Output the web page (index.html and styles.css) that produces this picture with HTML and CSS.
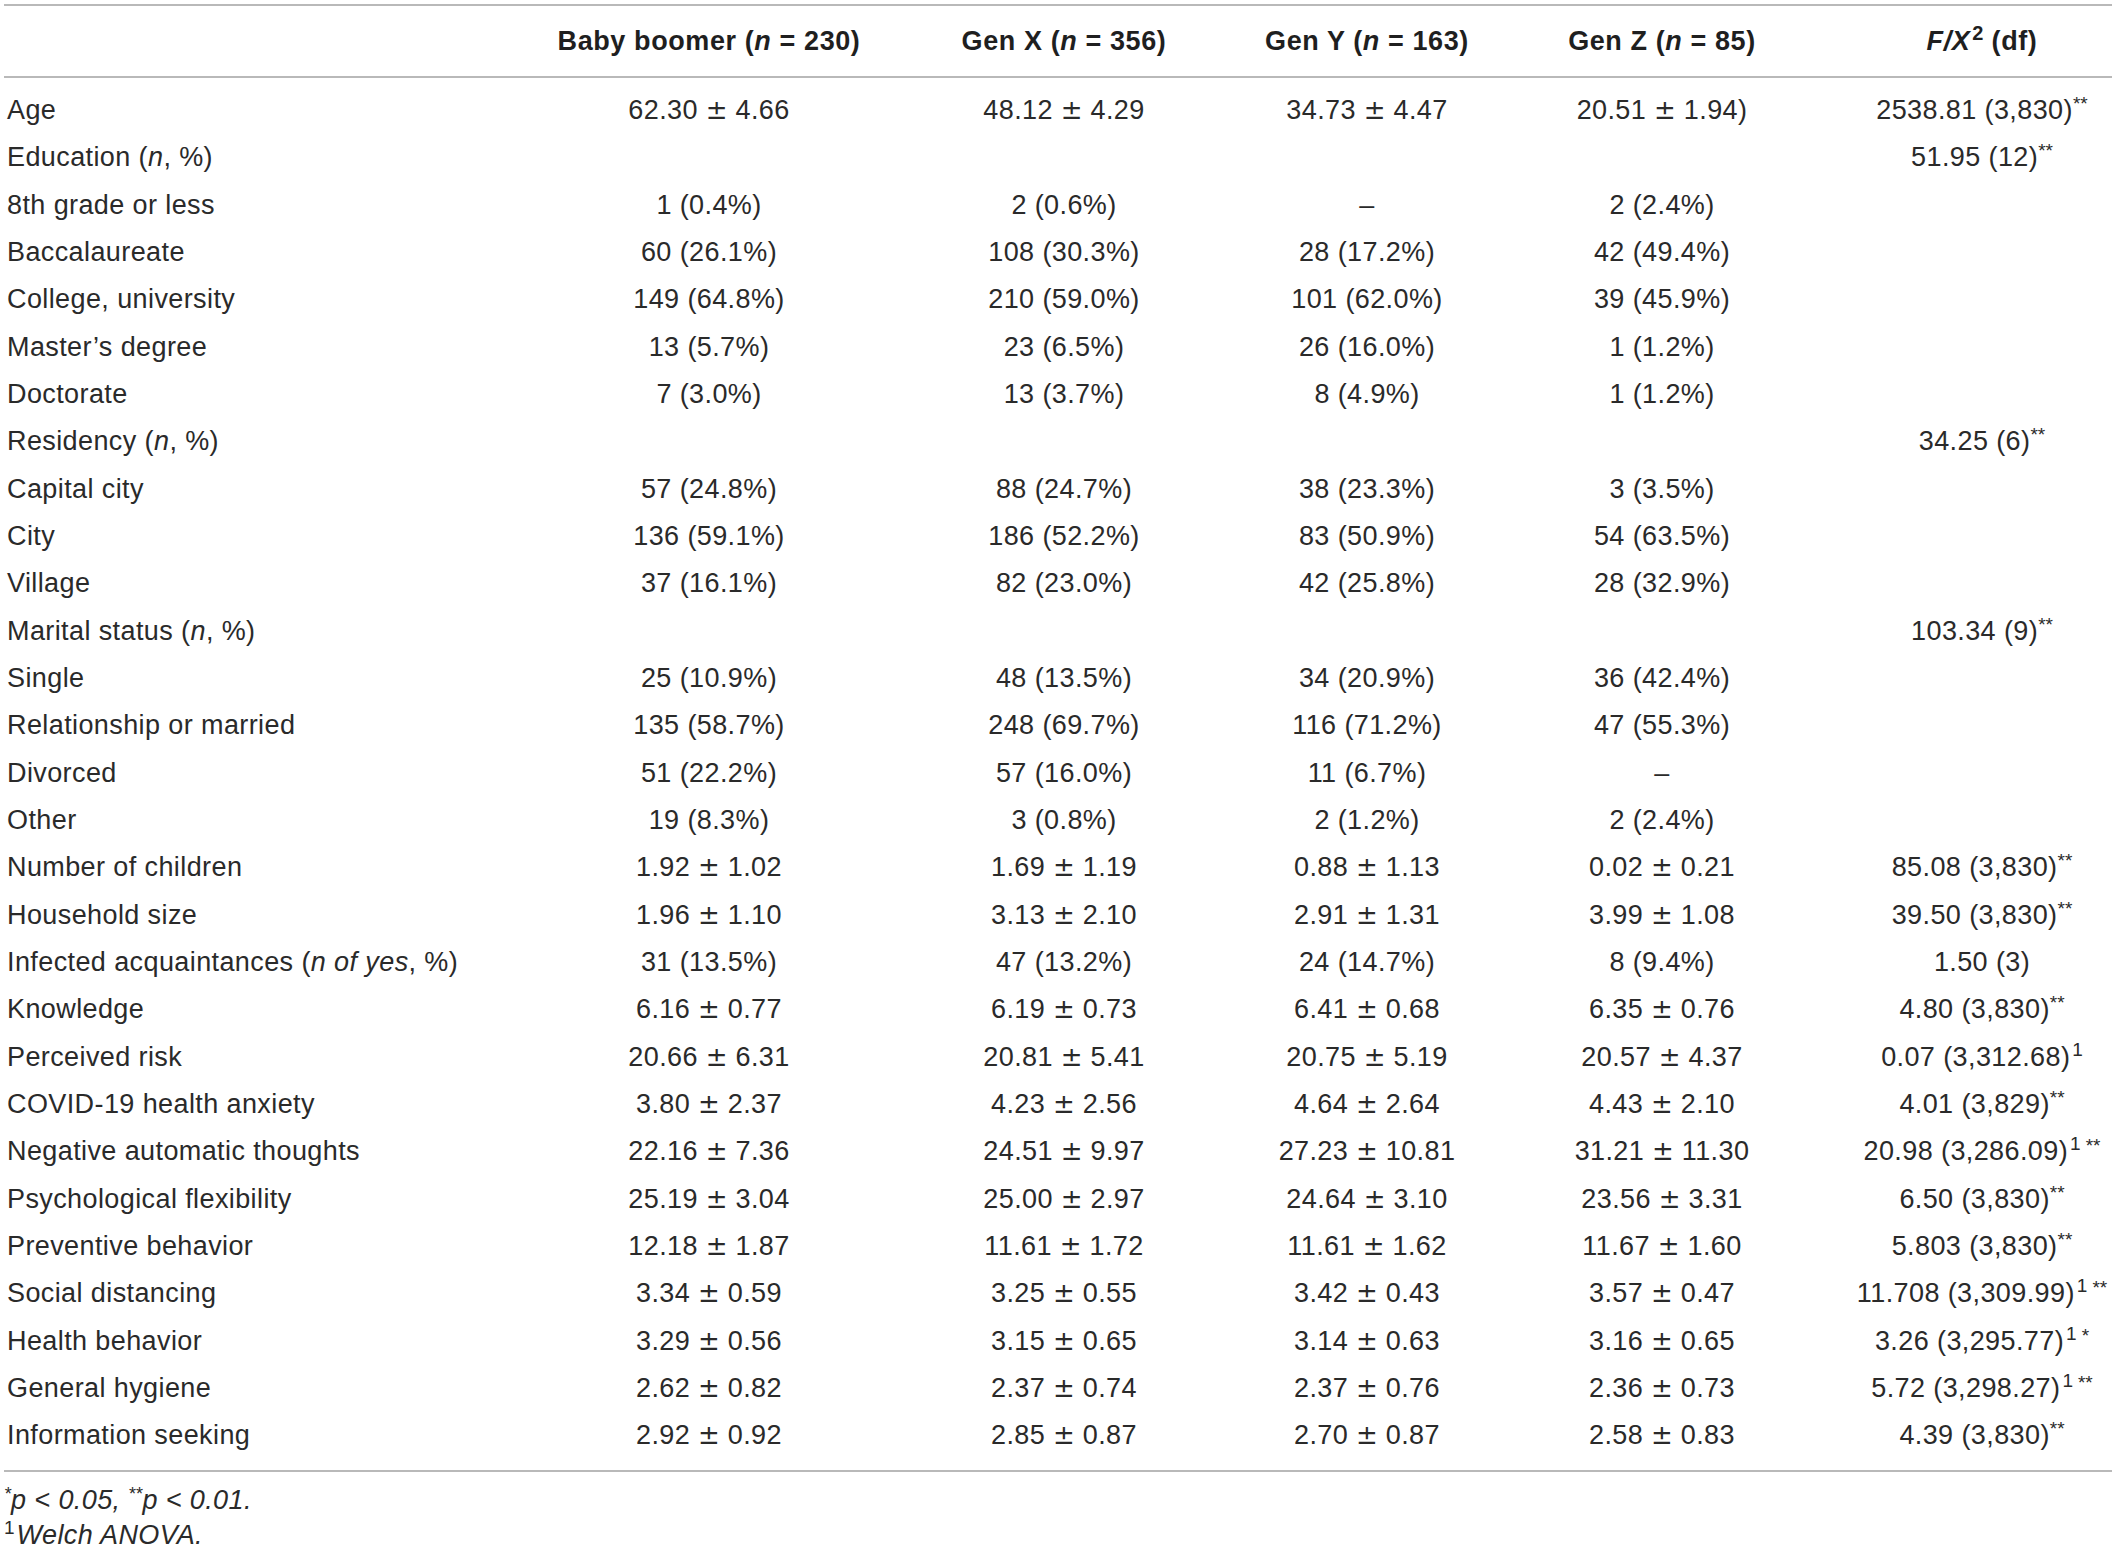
FILE: index.html
```html
<!DOCTYPE html>
<html>
<head>
<meta charset="utf-8">
<link rel="stylesheet" href="styles.css">
</head>
<body>
<div class="table">
  <div class="row head">
    <div class="c lab"></div>
    <div class="c">Baby boomer (<i>n</i> = 230)</div>
    <div class="c">Gen X (<i>n</i> = 356)</div>
    <div class="c">Gen Y (<i>n</i> = 163)</div>
    <div class="c">Gen Z (<i>n</i> = 85)</div>
    <div class="c f"><i>F/X</i><sup class="sq">2</sup> (df)</div>
  </div>
  <div class="body">
    <div class="row"><div class="c lab">Age</div><div class="c">62.30 <span class="pm">±</span> 4.66</div><div class="c">48.12 <span class="pm">±</span> 4.29</div><div class="c">34.73 <span class="pm">±</span> 4.47</div><div class="c">20.51 <span class="pm">±</span> 1.94)</div><div class="c f">2538.81 (3,830)<sup>**</sup></div></div>
    <div class="row"><div class="c lab">Education (<i>n</i>, %)</div><div class="c"></div><div class="c"></div><div class="c"></div><div class="c"></div><div class="c f">51.95 (12)<sup>**</sup></div></div>
    <div class="row"><div class="c lab">8th grade or less</div><div class="c">1 (0.4%)</div><div class="c">2 (0.6%)</div><div class="c">–</div><div class="c">2 (2.4%)</div><div class="c f"></div></div>
    <div class="row"><div class="c lab">Baccalaureate</div><div class="c">60 (26.1%)</div><div class="c">108 (30.3%)</div><div class="c">28 (17.2%)</div><div class="c">42 (49.4%)</div><div class="c f"></div></div>
    <div class="row"><div class="c lab">College, university</div><div class="c">149 (64.8%)</div><div class="c">210 (59.0%)</div><div class="c">101 (62.0%)</div><div class="c">39 (45.9%)</div><div class="c f"></div></div>
    <div class="row"><div class="c lab">Master’s degree</div><div class="c">13 (5.7%)</div><div class="c">23 (6.5%)</div><div class="c">26 (16.0%)</div><div class="c">1 (1.2%)</div><div class="c f"></div></div>
    <div class="row"><div class="c lab">Doctorate</div><div class="c">7 (3.0%)</div><div class="c">13 (3.7%)</div><div class="c">8 (4.9%)</div><div class="c">1 (1.2%)</div><div class="c f"></div></div>
    <div class="row"><div class="c lab">Residency (<i>n</i>, %)</div><div class="c"></div><div class="c"></div><div class="c"></div><div class="c"></div><div class="c f">34.25 (6)<sup>**</sup></div></div>
    <div class="row"><div class="c lab">Capital city</div><div class="c">57 (24.8%)</div><div class="c">88 (24.7%)</div><div class="c">38 (23.3%)</div><div class="c">3 (3.5%)</div><div class="c f"></div></div>
    <div class="row"><div class="c lab">City</div><div class="c">136 (59.1%)</div><div class="c">186 (52.2%)</div><div class="c">83 (50.9%)</div><div class="c">54 (63.5%)</div><div class="c f"></div></div>
    <div class="row"><div class="c lab">Village</div><div class="c">37 (16.1%)</div><div class="c">82 (23.0%)</div><div class="c">42 (25.8%)</div><div class="c">28 (32.9%)</div><div class="c f"></div></div>
    <div class="row"><div class="c lab">Marital status (<i>n</i>, %)</div><div class="c"></div><div class="c"></div><div class="c"></div><div class="c"></div><div class="c f">103.34 (9)<sup>**</sup></div></div>
    <div class="row"><div class="c lab">Single</div><div class="c">25 (10.9%)</div><div class="c">48 (13.5%)</div><div class="c">34 (20.9%)</div><div class="c">36 (42.4%)</div><div class="c f"></div></div>
    <div class="row"><div class="c lab">Relationship or married</div><div class="c">135 (58.7%)</div><div class="c">248 (69.7%)</div><div class="c">116 (71.2%)</div><div class="c">47 (55.3%)</div><div class="c f"></div></div>
    <div class="row"><div class="c lab">Divorced</div><div class="c">51 (22.2%)</div><div class="c">57 (16.0%)</div><div class="c">11 (6.7%)</div><div class="c">–</div><div class="c f"></div></div>
    <div class="row"><div class="c lab">Other</div><div class="c">19 (8.3%)</div><div class="c">3 (0.8%)</div><div class="c">2 (1.2%)</div><div class="c">2 (2.4%)</div><div class="c f"></div></div>
    <div class="row"><div class="c lab">Number of children</div><div class="c">1.92 <span class="pm">±</span> 1.02</div><div class="c">1.69 <span class="pm">±</span> 1.19</div><div class="c">0.88 <span class="pm">±</span> 1.13</div><div class="c">0.02 <span class="pm">±</span> 0.21</div><div class="c f">85.08 (3,830)<sup>**</sup></div></div>
    <div class="row"><div class="c lab">Household size</div><div class="c">1.96 <span class="pm">±</span> 1.10</div><div class="c">3.13 <span class="pm">±</span> 2.10</div><div class="c">2.91 <span class="pm">±</span> 1.31</div><div class="c">3.99 <span class="pm">±</span> 1.08</div><div class="c f">39.50 (3,830)<sup>**</sup></div></div>
    <div class="row"><div class="c lab">Infected acquaintances (<i>n of yes</i>, %)</div><div class="c">31 (13.5%)</div><div class="c">47 (13.2%)</div><div class="c">24 (14.7%)</div><div class="c">8 (9.4%)</div><div class="c f">1.50 (3)</div></div>
    <div class="row"><div class="c lab">Knowledge</div><div class="c">6.16 <span class="pm">±</span> 0.77</div><div class="c">6.19 <span class="pm">±</span> 0.73</div><div class="c">6.41 <span class="pm">±</span> 0.68</div><div class="c">6.35 <span class="pm">±</span> 0.76</div><div class="c f">4.80 (3,830)<sup>**</sup></div></div>
    <div class="row"><div class="c lab">Perceived risk</div><div class="c">20.66 <span class="pm">±</span> 6.31</div><div class="c">20.81 <span class="pm">±</span> 5.41</div><div class="c">20.75 <span class="pm">±</span> 5.19</div><div class="c">20.57 <span class="pm">±</span> 4.37</div><div class="c f">0.07 (3,312.68)<sup class="one">1</sup></div></div>
    <div class="row"><div class="c lab">COVID-19 health anxiety</div><div class="c">3.80 <span class="pm">±</span> 2.37</div><div class="c">4.23 <span class="pm">±</span> 2.56</div><div class="c">4.64 <span class="pm">±</span> 2.64</div><div class="c">4.43 <span class="pm">±</span> 2.10</div><div class="c f">4.01 (3,829)<sup>**</sup></div></div>
    <div class="row"><div class="c lab">Negative automatic thoughts</div><div class="c">22.16 <span class="pm">±</span> 7.36</div><div class="c">24.51 <span class="pm">±</span> 9.97</div><div class="c">27.23 <span class="pm">±</span> 10.81</div><div class="c">31.21 <span class="pm">±</span> 11.30</div><div class="c f">20.98 (3,286.09)<sup class="one">1</sup><sup class="st">**</sup></div></div>
    <div class="row"><div class="c lab">Psychological flexibility</div><div class="c">25.19 <span class="pm">±</span> 3.04</div><div class="c">25.00 <span class="pm">±</span> 2.97</div><div class="c">24.64 <span class="pm">±</span> 3.10</div><div class="c">23.56 <span class="pm">±</span> 3.31</div><div class="c f">6.50 (3,830)<sup>**</sup></div></div>
    <div class="row"><div class="c lab">Preventive behavior</div><div class="c">12.18 <span class="pm">±</span> 1.87</div><div class="c">11.61 <span class="pm">±</span> 1.72</div><div class="c">11.61 <span class="pm">±</span> 1.62</div><div class="c">11.67 <span class="pm">±</span> 1.60</div><div class="c f">5.803 (3,830)<sup>**</sup></div></div>
    <div class="row"><div class="c lab">Social distancing</div><div class="c">3.34 <span class="pm">±</span> 0.59</div><div class="c">3.25 <span class="pm">±</span> 0.55</div><div class="c">3.42 <span class="pm">±</span> 0.43</div><div class="c">3.57 <span class="pm">±</span> 0.47</div><div class="c f">11.708 (3,309.99)<sup class="one">1</sup><sup class="st">**</sup></div></div>
    <div class="row"><div class="c lab">Health behavior</div><div class="c">3.29 <span class="pm">±</span> 0.56</div><div class="c">3.15 <span class="pm">±</span> 0.65</div><div class="c">3.14 <span class="pm">±</span> 0.63</div><div class="c">3.16 <span class="pm">±</span> 0.65</div><div class="c f">3.26 (3,295.77)<sup class="one">1</sup><sup class="st">*</sup></div></div>
    <div class="row"><div class="c lab">General hygiene</div><div class="c">2.62 <span class="pm">±</span> 0.82</div><div class="c">2.37 <span class="pm">±</span> 0.74</div><div class="c">2.37 <span class="pm">±</span> 0.76</div><div class="c">2.36 <span class="pm">±</span> 0.73</div><div class="c f">5.72 (3,298.27)<sup class="one">1</sup><sup class="st">**</sup></div></div>
    <div class="row"><div class="c lab">Information seeking</div><div class="c">2.92 <span class="pm">±</span> 0.92</div><div class="c">2.85 <span class="pm">±</span> 0.87</div><div class="c">2.70 <span class="pm">±</span> 0.87</div><div class="c">2.58 <span class="pm">±</span> 0.83</div><div class="c f">4.39 (3,830)<sup>**</sup></div></div>
  </div>
  <div class="notes">
    <div class="note"><i><sup>*</sup>p &lt; 0.05, <sup>**</sup>p &lt; 0.01.</i></div>
    <div class="note"><sup class="fn">1</sup><i>Welch ANOVA.</i></div>
  </div>
</div>
</body>
</html>
```
FILE: styles.css
```css
html, body {
  margin: 0;
  padding: 0;
  background: #ffffff;
}
body {
  font-family: "Liberation Sans", Arial, sans-serif;
  font-size: 27px;
  color: #2a2a2a;
  letter-spacing: 0.4px;
}
.table {
  margin: 4px 0 0 4px;
  width: 2108px;
}
.row {
  display: grid;
  grid-template-columns: 528px 354px 356px 250px 340px 280px;
  align-items: center;
  height: 47.33px;
}
.head {
  height: 70px;
  border-top: 2px solid #b9b9b9;
  border-bottom: 2px solid #b9b9b9;
  font-weight: bold;
  color: #1f1f1f;
  letter-spacing: 0.6px;
}
.body {
  padding: 9px 0 10px;
  border-bottom: 2px solid #b9b9b9;
}
.c {
  text-align: center;
  white-space: nowrap;
}
.c.lab {
  text-align: left;
  padding-left: 3px;
}
.c.f {
  padding-left: 20px;
}
.pm {
  font-family: "DejaVu Sans", sans-serif;
  font-size: 26px;
  letter-spacing: 0;
}
sup {
  font-size: 19px;
  line-height: 0;
  vertical-align: 9px;
  letter-spacing: 0;
}
sup.sq {
  font-size: 20px;
  vertical-align: 10px;
  margin-left: 2px;
}
sup.one {
  font-size: 19px;
  vertical-align: 10px;
  margin-left: 2px;
}
sup.st {
  margin-left: 5px;
  vertical-align: 8px;
}
.notes {
  padding: 11px 0 0 0;
}
.note {
  height: 35px;
  line-height: 35px;
  white-space: nowrap;
}
.note sup {
  font-size: 18px;
  vertical-align: 9px;
}
.note sup.fn {
  font-size: 19px;
  vertical-align: 10px;
  margin-right: 2px;
}
```
